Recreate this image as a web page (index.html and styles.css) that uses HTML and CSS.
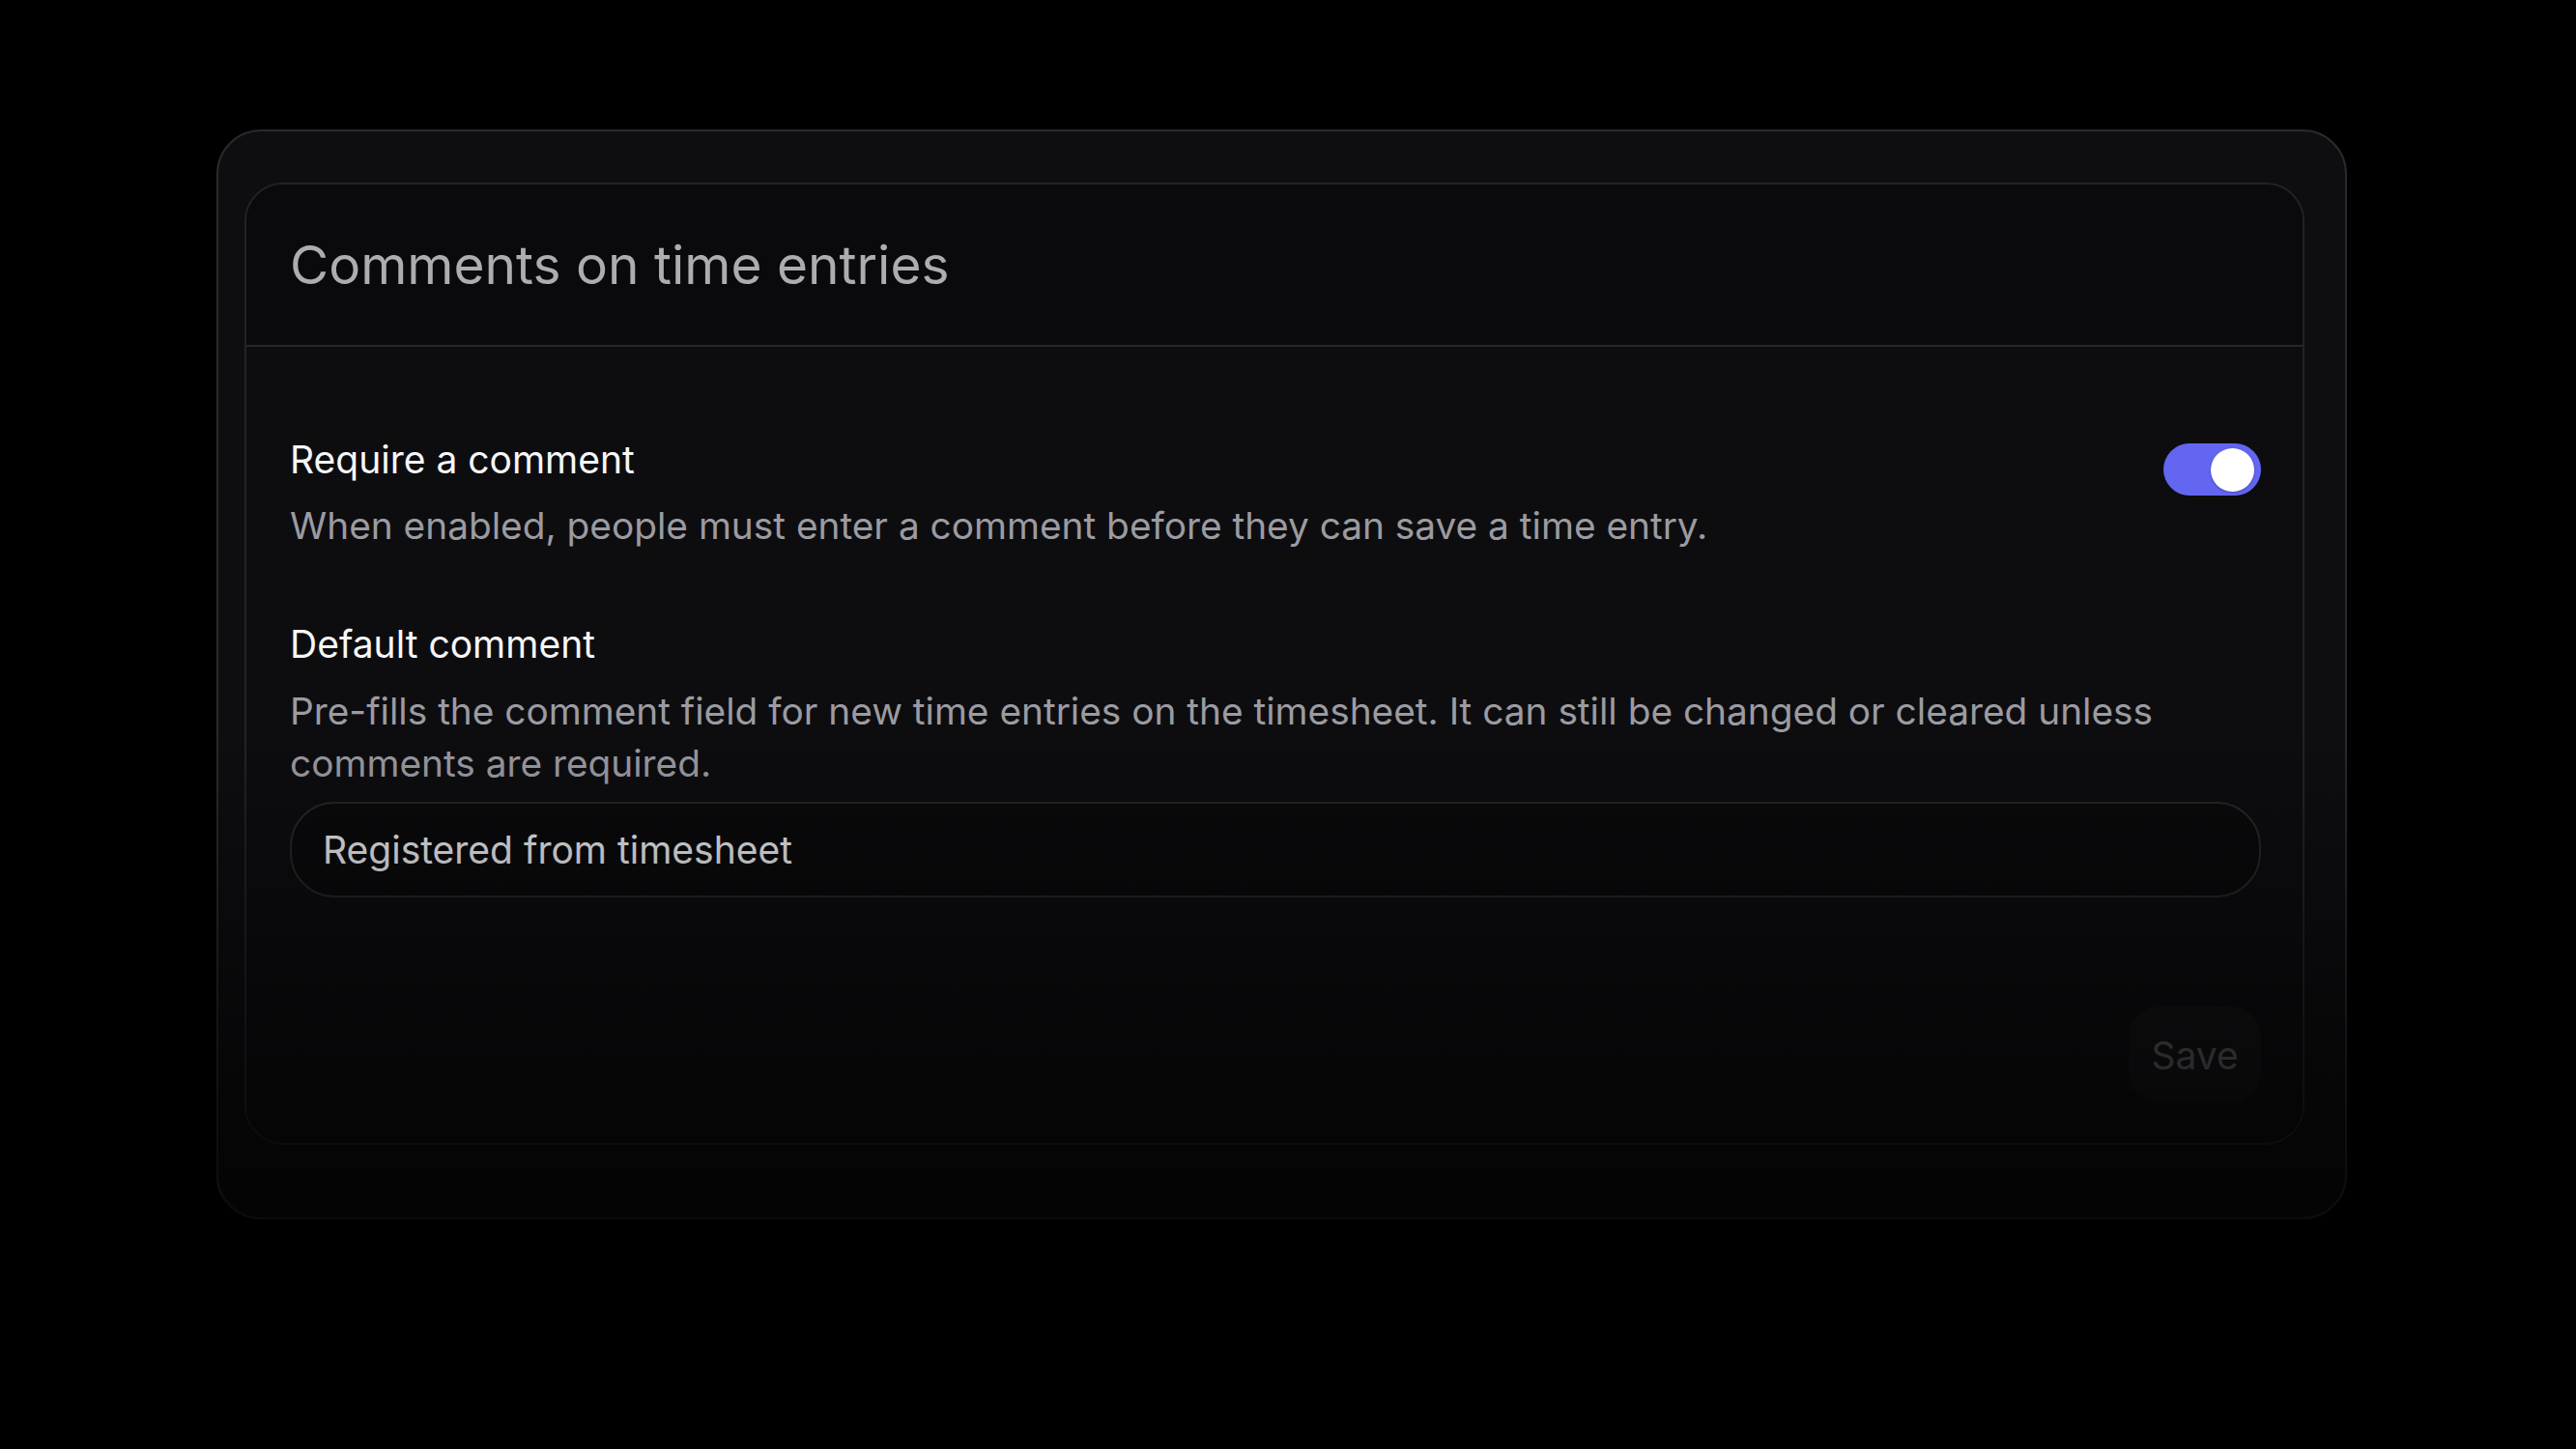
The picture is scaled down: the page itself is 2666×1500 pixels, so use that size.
FILE: index.html
```html
<!DOCTYPE html>
<html lang="en">
<head>
<meta charset="utf-8">
<title>Comments on time entries</title>
<link rel="stylesheet" href="styles.css">
</head>
<body>
<main class="stage">
  <section class="frame">
    <div class="card">
      <header class="card-head">
        <h1 class="card-title">Comments on time entries</h1>
      </header>
      <div class="card-body">
        <div class="setting setting-toggle">
          <div class="setting-text">
            <div class="setting-label">Require a comment</div>
            <p class="setting-desc">When enabled, people must enter a comment before they can save a time entry.</p>
          </div>
          <button class="switch is-on" type="button" aria-pressed="true"><span class="switch-knob"></span></button>
        </div>
        <div class="setting setting-field">
          <div class="setting-label">Default comment</div>
          <p class="setting-desc">Pre-fills the comment field for new time entries on the timesheet. It can still be changed or cleared unless comments are required.</p>
          <div class="text-input">Registered from timesheet</div>
        </div>
        <div class="actions">
          <button class="btn-save" type="button" disabled>Save</button>
        </div>
      </div>
    </div>
  </section>
</main>
</body>
</html>
```

FILE: styles.css
```css
* { box-sizing: border-box; }

html, body {
  margin: 0;
  padding: 0;
  background: #000;
}

body {
  font-family: Inter, "Noto Sans", "Liberation Sans", sans-serif;
  color: #f4f4f5;
  width: 2666px;
  height: 1500px;
  overflow: hidden;
}

.stage {
  padding: 134px 0 0 224px;
}

.frame {
  position: relative;
  width: 2205px;
  height: 1128px;
  padding: 53px 42px 0 27px;
  background: #0e0e11;
  border: 2px solid #2a2a2e;
  border-radius: 46px;
}

.frame::after {
  content: "";
  position: absolute;
  inset: -2px;
  border-radius: 46px;
  pointer-events: none;
  background: linear-gradient(to bottom, rgba(0,0,0,0) 0%, rgba(0,0,0,0) 55%, rgba(0,0,0,0.45) 80%, rgba(0,0,0,0.75) 100%);
}

.card {
  height: 996px;
  background: #0d0d10;
  border: 2px solid #232327;
  border-radius: 40px;
  display: flex;
  flex-direction: column;
  overflow: hidden;
}

.card-head {
  height: 168px;
  flex: none;
  display: flex;
  align-items: center;
  padding: 0 45px;
  background: #0a0a0c;
  border-bottom: 2px solid #26262a;
}

.card-title {
  margin: 0;
  font-size: 55px;
  font-weight: 400;
  line-height: 1.2;
  color: #acacb1;
  letter-spacing: 0;
}

.card-body {
  flex: 1;
  display: flex;
  flex-direction: column;
  padding: 92px 43px 41px 45px;
}

.setting-toggle {
  display: flex;
  align-items: flex-start;
  justify-content: space-between;
}

.setting-label {
  font-size: 39px;
  line-height: 50px;
  font-weight: 400;
  color: #f6f6f7;
}

.setting-desc {
  margin: 16px 0 0;
  font-size: 38.8px;
  line-height: 54px;
  color: #9b9ba1;
}

.switch {
  margin-top: 8px;
  width: 101px;
  height: 54px;
  flex: none;
  border: none;
  border-radius: 27px;
  background: #6366f1;
  padding: 0 7px 0 0;
  display: flex;
  align-items: center;
  justify-content: flex-end;
}

.switch-knob {
  width: 45px;
  height: 45px;
  border-radius: 50%;
  background: #fff;
  box-shadow: 0 1px 3px rgba(0,0,0,0.25);
}

.setting-field {
  margin-top: 71px;
}

.setting-field .setting-desc {
  margin-top: 17px;
}

.text-input {
  margin-top: 13px;
  height: 99px;
  display: flex;
  align-items: center;
  padding: 0 32px;
  border: 2px solid #26262a;
  border-radius: 46px;
  background: #0a0a0c;
  font-size: 39px;
  color: #ececef;
}

.actions {
  margin-top: auto;
  display: flex;
  justify-content: flex-end;
}

.btn-save {
  width: 137px;
  height: 100px;
  border: none;
  border-radius: 32px;
  background: #141417;
  color: #5a5a60;
  font-family: inherit;
  font-size: 39px;
  font-weight: 400;
  padding: 0;
}
```
